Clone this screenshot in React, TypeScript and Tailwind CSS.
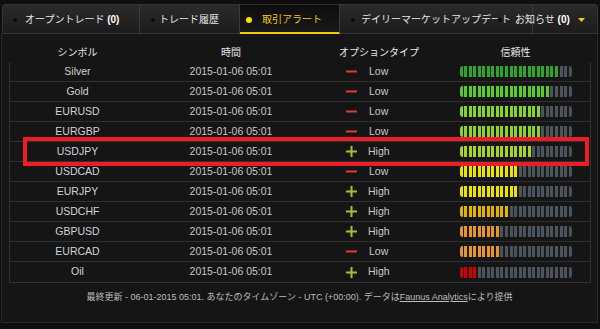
import React from "react";

type Row = { sym: string; high: boolean; fill: number; color: string };

const ROWS: Row[] = [
  { sym: "Silver", high: false, fill: 22, color: "#2fa62a" },
  { sym: "Gold", high: false, fill: 20, color: "#58cc2c" },
  { sym: "EURUSD", high: false, fill: 18, color: "#8ad428" },
  { sym: "EURGBP", high: false, fill: 18, color: "#8ad428" },
  { sym: "USDJPY", high: true, fill: 16, color: "#a9d426" },
  { sym: "USDCAD", high: false, fill: 13, color: "#ece400" },
  { sym: "EURJPY", high: true, fill: 13, color: "#ece400" },
  { sym: "USDCHF", high: true, fill: 11, color: "#e2b400" },
  { sym: "GBPUSD", high: true, fill: 9, color: "#e8952c" },
  { sym: "EURCAD", high: false, fill: 9, color: "#e8952c" },
  { sym: "Oil", high: true, fill: 4, color: "#d40000" },
];

const SEGMENTS = 25;

const Bar: React.FC<{ fill: number; color: string }> = ({ fill, color }) => (
  <div className="flex h-[11px] w-[112px] gap-[1.5px] overflow-hidden rounded-[3px] bg-[#1a1a1a]">
    {[...Array(SEGMENTS)].map((_, i) => (
      <div
        key={i}
        className="flex-1"
        style={{ backgroundColor: i < fill ? color : "#4b535c" }}
      />
    ))}
  </div>
);

const Dot: React.FC<{ yellow?: boolean }> = ({ yellow }) => (
  <span
    className={
      yellow
        ? "inline-block h-[6px] w-[6px] rounded-full bg-[#ffe300]"
        : "inline-block h-[6px] w-[6px] rounded-full border border-[#2a2a2a] bg-[#080808]"
    }
  />
);

const App: React.FC = () => {
  return (
    <div className="h-[329px] w-[600px] overflow-hidden bg-[#0f0f0f] font-['Liberation_Sans','Noto_Sans_CJK_JP',sans-serif]">
      {/* tab bar */}
      <div className="relative flex h-[34px] pt-[4px] pl-[2px]">
        <div className="flex h-[30px] w-[138px] items-center rounded-tl-[4px] border-t border-l border-r border-b border-t-[#333] border-l-[#333] border-r-[#3a3a3a] border-b-[#353535] bg-gradient-to-b from-[#2a2a2a] to-[#1c1c1c] pt-[1px] pl-[9px] text-[10px] text-[#e4e4e4]">
          <Dot />
          <span className="ml-[7px] whitespace-nowrap">
            オープントレード <b className="font-bold text-white">(0)</b>
          </span>
        </div>
        <div className="flex h-[30px] w-[100px] items-center border-t border-r border-b border-t-[#333] border-r-[#3a3a3a] border-b-[#353535] bg-gradient-to-b from-[#2a2a2a] to-[#1c1c1c] pt-[1px] pl-[10px] text-[10px] text-[#e4e4e4]">
          <Dot />
          <span className="ml-[3px] whitespace-nowrap">トレード履歴</span>
        </div>
        <div className="flex h-[30px] w-[100px] items-center border-t border-r border-b-2 border-t-[#2a2a2a] border-r-[#3a3a3a] border-b-[#f0c814] bg-gradient-to-b from-[#0e0e0e] to-[#181818] pt-[2px] pl-[6px] text-[10px] text-[#f2c511]">
          <Dot yellow />
          <span className="ml-[10px] whitespace-nowrap">取引アラート</span>
        </div>
        <div className="flex h-[30px] w-[193px] items-center border-t border-r border-b border-t-[#333] border-r-[#3a3a3a] border-b-[#353535] bg-gradient-to-b from-[#2a2a2a] to-[#1c1c1c] pt-[1px] pl-[10px] text-[10px] text-[#e4e4e4]">
          <Dot />
          <span className="ml-[5px] whitespace-nowrap">デイリーマーケットアップデート</span>
        </div>
        <div className="h-[30px] w-[65px] rounded-tr-[4px] border-t border-r border-b border-t-[#333] border-r-[#333] border-b-[#353535] bg-gradient-to-b from-[#2a2a2a] to-[#1c1c1c]" />
        {/* notifications tab content lies over the daily update tab */}
        <div className="absolute top-[4px] left-[497px] flex h-[30px] items-center pt-[1px] text-[10px] text-[#e4e4e4]">
          <Dot />
          <span className="ml-[12px] whitespace-nowrap">
            お知らせ <b className="font-bold text-white">(0)</b>
          </span>
          <svg className="ml-[8px]" width="7" height="4" viewBox="0 0 7 4">
            <path d="M0 0 L7 0 L3.5 4 Z" fill="#f2c511" />
          </svg>
        </div>
      </div>

      {/* panel */}
      <div className="relative ml-[1px] h-[289px] w-[597px] border-r border-b border-l border-[#2a2a2a] bg-[#151515]">
        {/* header */}
        <div className="ml-[8px] grid h-[28px] w-[580px] grid-cols-[135px_172px_124px_1fr] pt-[11px] text-[10px] text-[#e8e8e8]">
          <div className="text-center">シンボル</div>
          <div className="text-center">時間</div>
          <div className="text-center">オプションタイプ</div>
          <div className="text-center">信頼性</div>
        </div>

        {/* body */}
        <div className="ml-[7px] w-[582px] border-r border-b border-l border-[#333]">
          {ROWS.map((r) => (
            <div
              key={r.sym}
              className="grid h-[20px] grid-cols-[135px_172px_124px_1fr] items-center border-b border-[#303030] text-[10.5px] last:border-b-0"
            >
              <div className="text-center text-[#cfd3d8]">{r.sym}</div>
              <div className="text-center text-[#c8c8c8]">2015-01-06 05:01</div>
              <div className="flex items-center pl-[29px] text-[#c8c8c8]">
                {r.high ? (
                  <svg width="11" height="11" viewBox="0 0 11 11">
                    <rect x="0" y="4.5" width="11" height="2" fill="#a3c42c" />
                    <rect x="4.5" y="0" width="2" height="11" fill="#a3c42c" />
                  </svg>
                ) : (
                  <svg width="11" height="11" viewBox="0 0 11 11">
                    <rect x="0" y="4.5" width="11" height="2" fill="#e03a3a" />
                  </svg>
                )}
                <span className={r.high ? "ml-[11px]" : "ml-[12px]"}>
                  {r.high ? "High" : "Low"}
                </span>
              </div>
              <div className="flex justify-center">
                <Bar fill={r.fill} color={r.color} />
              </div>
            </div>
          ))}
        </div>

        {/* footer */}
        <div className="pt-[8px] text-center text-[9px] text-[#bdbdbd]">
          最終更新 - 06-01-2015 05:01. あなたのタイムゾーン - UTC (+00:00). データは
          <span className="underline">Faunus Analytics</span>により提供
        </div>

        {/* highlight annotation */}
        <div className="pointer-events-none absolute top-[103px] left-[21px] h-[29px] w-[566px] border-4 border-[#ee1c25]" />
      </div>
    </div>
  );
};

export default App;
